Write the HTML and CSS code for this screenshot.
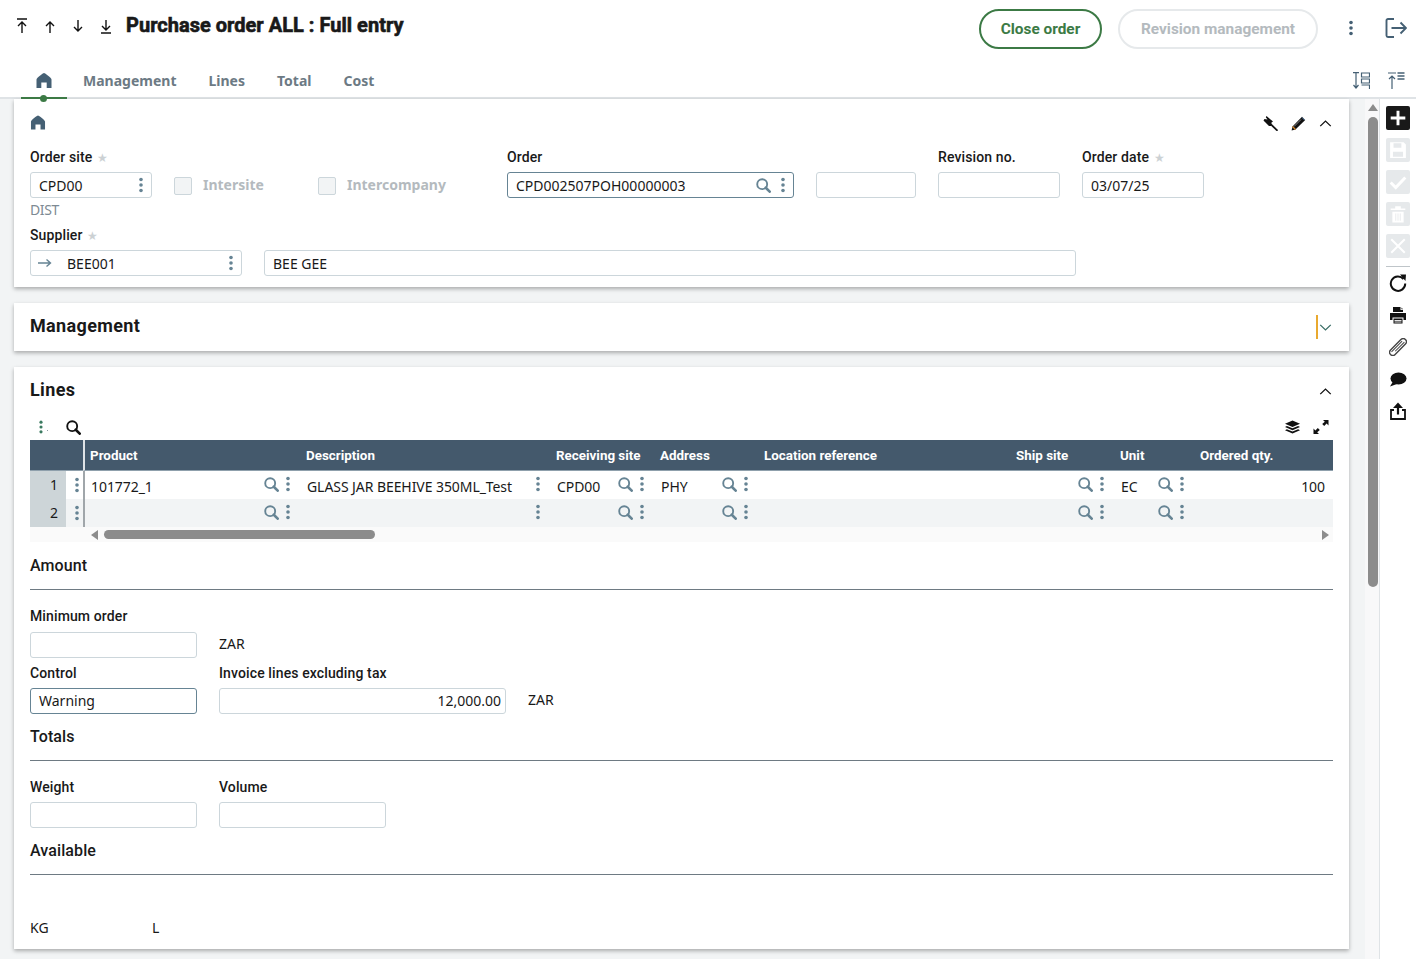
FILE: index.html
```html
<!DOCTYPE html>
<html lang="en">
<head>
<meta charset="utf-8">
<title>Purchase order ALL : Full entry</title>
<link rel="stylesheet" href="styles.css">
</head>
<body>
<svg class="sprite" xmlns="http://www.w3.org/2000/svg">
  <symbol id="i-home" viewBox="0 0 16 16"><path d="M8 .5 C9 .5 15.500 5.500 15.500 7 V15.500 H10.700 V10 H5.300 V15.500 H.5 V7 C.5 5.500 7 .5 8 .5Z" fill="currentColor"/></symbol>
  <symbol id="i-search" viewBox="0 0 16 16"><circle cx="6.600" cy="6.600" r="5.300" fill="none" stroke="currentColor" stroke-width="2"/><path d="M10.400 10.400 14.600 14.600" stroke="currentColor" stroke-width="2.800" stroke-linecap="round"/></symbol>
  <symbol id="i-dots" viewBox="0 0 4 16"><circle cx="2" cy="2.500" r="1.800" fill="currentColor"/><circle cx="2" cy="8" r="1.800" fill="currentColor"/><circle cx="2" cy="13.500" r="1.800" fill="currentColor"/></symbol>
  <symbol id="i-chev" viewBox="0 0 14 8"><path d="M1 7 7 1.200 13 7" fill="none" stroke="currentColor" stroke-width="1.500"/></symbol>
</svg>

<header class="head">
  <div class="topbar">
    <div class="navs">
      <svg class="nav" viewBox="0 0 12 16"><path d="M1 1H11M6 15V4M2 8 6 4 10 8" fill="none" stroke="currentColor" stroke-width="1.400"/></svg>
      <svg class="nav" viewBox="0 0 12 16"><path d="M6 15V4M2 8 6 4 10 8" fill="none" stroke="currentColor" stroke-width="1.400"/></svg>
      <svg class="nav" viewBox="0 0 12 16"><path d="M6 2V13M2 9 6 13 10 9" fill="none" stroke="currentColor" stroke-width="1.400"/></svg>
      <svg class="nav" viewBox="0 0 12 16"><path d="M6 2V12M2 8 6 12 10 8M1 15H11" fill="none" stroke="currentColor" stroke-width="1.400"/></svg>
    </div>
    <h1 class="title">Purchase order ALL : Full entry</h1>
    <button class="pill pill-green">Close order</button>
    <button class="pill pill-off">Revision management</button>
    <svg class="head-dots"><use href="#i-dots"/></svg>
    <svg class="logout" viewBox="0 0 22 22"><path d="M9 2H3a1.500 1.500 0 0 0-1.500 1.500V18.500A1.500 1.500 0 0 0 3 20H9M6.500 11H20.500M15.500 5.500 21 11 15.500 16.500" fill="none" stroke="currentColor" stroke-width="1.900"/></svg>
  </div>
  <nav class="tabs">
    <a class="tab tab-home"><svg class="home"><use href="#i-home"/></svg></a>
    <a class="tab">Management</a>
    <a class="tab">Lines</a>
    <a class="tab">Total</a>
    <a class="tab">Cost</a>
    <svg class="tool tool-first" viewBox="0 0 17 17"><path d="M0 .7H6M3 .7V16M.5 13 3 16 5.500 13" fill="none" stroke="currentColor" stroke-width="1.200"/><path d="M8.500 1H16.500V5H8.500ZM8.500 7H16.500V11H8.500ZM8.500 13H16.500V17" fill="none" stroke="currentColor" stroke-width="1.200"/></svg>
    <svg class="tool" viewBox="0 0 17 17"><path d="M0 1H8M4 17V4M1 7 4 4 7 7" fill="none" stroke="currentColor" stroke-width="1.200"/><path d="M9.500 1H16.500M9.500 4H16.500M9.500 7H16.500" fill="none" stroke="currentColor" stroke-width="1.500"/></svg>
  </nav>
</header>

<div class="body">
  <main class="main">
    <section class="card card-top">
      <div class="card-icons">
        <svg class="home home-sm"><use href="#i-home"/></svg>
        <span class="spacer"></span>
        <svg class="ic14" viewBox="0 0 15 15"><path d="M3.500 0 10 5.500 8.500 6.500 8 10 6 10 .5 4.500 1.500 3 4.500 3.500 2.800 1.200Z" fill="#111"/><path d="M5.500 6 14.500 14.800" stroke="#111" stroke-width="1.700"/></svg>
        <svg class="ic14" viewBox="0 0 15 15"><path d="M11 .8 14.200 4 4.500 13.500 .6 14.400 1.500 10.500Z" fill="#111"/><path d="M1.500 10.500 4.500 13.500" stroke="#d98a2b" stroke-width="1.200"/><path d="M11 1.500 13.500 4" stroke="#6aa0d8" stroke-width=".8"/><path d="M3 10.500 10 3.500" stroke="#fff" stroke-width=".5"/></svg>
        <svg class="chev"><use href="#i-chev"/></svg>
      </div>
      <div class="row">
        <div class="field w122"><label class="lbl">Order site <i class="req">★</i></label><div class="inp">CPD00<svg class="dots"><use href="#i-dots"/></svg></div></div>
        <div class="check w122"><span class="box"></span><span class="check-t">Intersite</span></div>
        <div class="check w167"><span class="box"></span><span class="check-t">Intercompany</span></div>
        <div class="field w287"><label class="lbl">Order</label><div class="inp inp-dark">CPD002507POH00000003<svg class="mag"><use href="#i-search"/></svg><svg class="dots dots-near"><use href="#i-dots"/></svg></div></div>
        <div class="field w100"><span class="lbl">&nbsp;</span><div class="inp"></div></div>
        <div class="field w122"><label class="lbl">Revision no.</label><div class="inp"></div></div>
        <div class="field w122"><label class="lbl">Order date <i class="req">★</i></label><div class="inp">03/07/25</div></div>
      </div>
      <div class="sub">DIST</div>
      <label class="lbl">Supplier <i class="req">★</i></label>
      <div class="row">
        <div class="inp w212 inp-link"><svg class="arrow" viewBox="0 0 14 10"><path d="M0 5H12M8.500 1.500 12.500 5 8.500 8.500" fill="none" stroke="currentColor" stroke-width="1.400"/></svg>BEE001<svg class="dots"><use href="#i-dots"/></svg></div>
        <div class="inp w812">BEE GEE</div>
      </div>
    </section>

    <section class="card card-bar">
      <h2 class="h2">Management</h2>
      <span class="amber"></span>
      <svg class="chev chev-down"><use href="#i-chev"/></svg>
    </section>

    <section class="card card-lines">
      <div class="lines-head"><h2 class="h2">Lines</h2><svg class="chev chev-lines"><use href="#i-chev"/></svg></div>
      <div class="grid-tools">
        <svg class="dots dots-green"><use href="#i-dots"/></svg>
        <span class="speck"></span>
        <svg class="tool-mag"><use href="#i-search"/></svg>
        <span class="spacer"></span>
        <svg class="layers" viewBox="0 0 16 14"><path d="M8 0 16 3.500 8 7 0 3.500Z" fill="#111"/><path d="M2 5.800 8 8.400 14 5.800 16 6.900 8 10.400 0 6.900ZM2 9.300 8 11.800 14 9.300 16 10.400 8 14 0 10.400Z" fill="#111"/></svg>
        <svg class="expand" viewBox="0 0 16 16"><path d="M10 1H15.500V6.500L13.600 4.600 11.200 7 9.200 5 11.800 2.800ZM6 15H.5V9.500L2.400 11.400 4.800 9 6.800 11 4.200 13.200Z" fill="#111"/></svg>
      </div>
      <table class="grid">
        <colgroup><col class="c-num"><col class="c-hnd"><col class="c-prod"><col class="c-desc"><col class="c-site"><col class="c-site"><col class="c-loc"><col class="c-site"><col class="c-unit"><col></colgroup>
        <thead><tr><th colspan="2" class="corner"></th><th class="first">Product</th><th>Description</th><th>Receiving site</th><th>Address</th><th>Location reference</th><th>Ship site</th><th>Unit</th><th>Ordered qty.</th></tr></thead>
        <tbody>
          <tr>
            <td class="num">1</td><td class="hnd"><svg class="dots"><use href="#i-dots"/></svg></td>
            <td class="first"><div class="cell">101772_1<svg class="mag"><use href="#i-search"/></svg><svg class="dots"><use href="#i-dots"/></svg></div></td>
            <td><div class="cell">GLASS JAR BEEHIVE 350ML_Test<svg class="dots only"><use href="#i-dots"/></svg></div></td>
            <td><div class="cell">CPD00<svg class="mag"><use href="#i-search"/></svg><svg class="dots"><use href="#i-dots"/></svg></div></td>
            <td><div class="cell">PHY<svg class="mag"><use href="#i-search"/></svg><svg class="dots"><use href="#i-dots"/></svg></div></td>
            <td></td>
            <td><div class="cell"><svg class="mag"><use href="#i-search"/></svg><svg class="dots"><use href="#i-dots"/></svg></div></td>
            <td><div class="cell">EC<svg class="mag"><use href="#i-search"/></svg><svg class="dots"><use href="#i-dots"/></svg></div></td>
            <td class="right"><div class="cell cell-end">100</div></td>
          </tr>
          <tr class="alt">
            <td class="num">2</td><td class="hnd"><svg class="dots"><use href="#i-dots"/></svg></td>
            <td class="first"><div class="cell"><svg class="mag"><use href="#i-search"/></svg><svg class="dots"><use href="#i-dots"/></svg></div></td>
            <td><div class="cell"><svg class="dots only"><use href="#i-dots"/></svg></div></td>
            <td><div class="cell"><svg class="mag"><use href="#i-search"/></svg><svg class="dots"><use href="#i-dots"/></svg></div></td>
            <td><div class="cell"><svg class="mag"><use href="#i-search"/></svg><svg class="dots"><use href="#i-dots"/></svg></div></td>
            <td></td>
            <td><div class="cell"><svg class="mag"><use href="#i-search"/></svg><svg class="dots"><use href="#i-dots"/></svg></div></td>
            <td><div class="cell"><svg class="mag"><use href="#i-search"/></svg><svg class="dots"><use href="#i-dots"/></svg></div></td>
            <td></td>
          </tr>
        </tbody>
      </table>
      <div class="hscroll">
        <span class="tri tri-l"></span>
        <span class="hthumb"></span>
        <span class="spacer"></span>
        <span class="tri tri-r"></span>
      </div>

      <h3 class="h3 first-h3">Amount</h3>
      <div class="amount">
        <label class="lbl">Minimum order</label>
        <div class="row line-row"><div class="inp w167"></div><span class="unit">ZAR</span></div>
      </div>
      <div class="row pair">
        <div class="field w167"><label class="lbl">Control</label><div class="inp inp-dark">Warning</div></div>
        <div class="field w287"><label class="lbl">Invoice lines excluding tax</label><div class="inp inp-right">12,000.00</div></div>
        <span class="unit unit-end">ZAR</span>
      </div>
      <h3 class="h3">Totals</h3>
      <div class="row pair pair-t">
        <div class="field w167"><label class="lbl">Weight</label><div class="inp"></div></div>
        <div class="field w167"><label class="lbl">Volume</label><div class="inp"></div></div>
      </div>
      <h3 class="h3">Available</h3>
      <div class="foot-units"><span class="kg">KG</span><span>L</span></div>
    </section>
  </main>

  <div class="vscroll"><span class="tri tri-u"></span><span class="vthumb"></span></div>

  <aside class="side">
    <button class="act act-dark"><svg viewBox="0 0 16 16"><path d="M8 1.500V14.500M1.500 8H14.500" stroke="#fff" stroke-width="2.600"/></svg></button>
    <button class="act"><svg viewBox="0 0 16 16"><path d="M1 1H13L15 3V15H1ZM4 2V6H11V2ZM3.500 9.500V14H12.500V9.500Z" fill="#fff" fill-rule="evenodd"/></svg></button>
    <button class="act"><svg viewBox="0 0 16 16"><path d="M1.500 8.500 6 13 14.500 4" fill="none" stroke="#fff" stroke-width="2.600"/></svg></button>
    <button class="act"><svg viewBox="0 0 16 16"><path d="M1.500 3H14.500V4.500H1.500ZM5.500 3V1H10.500V3M3 6H13V15.500H3Z" fill="#fff"/><path d="M6 7.500V14M8 7.500V14M10 7.500V14" stroke="#e6e9eb" stroke-width=".8"/></svg></button>
    <button class="act"><svg viewBox="0 0 16 16"><path d="M2 2 14 14M14 2 2 14" stroke="#fff" stroke-width="1.800"/></svg></button>
    <span class="side-line"></span>
    <svg class="side-ic" viewBox="0 0 18 18"><path d="M14.500 5A7.200 7.200 0 1 0 16.200 9.500" fill="none" stroke="#111" stroke-width="2"/><path d="M11 .5 17 .5 16.500 7Z" fill="#111"/></svg>
    <svg class="side-ic" viewBox="0 0 18 18"><path d="M4 1H11.500V4H14V6H4ZM12.500 1.500 14 3.200H12.500ZM1 7H17V14H14.500V11.500H3.500V14H1ZM4.500 12.500H13.500V17.500H4.500Z" fill="#111"/><path d="M5.500 14.500H12.500M5.500 16H12.500" stroke="#fff" stroke-width=".9"/></svg>
    <svg class="side-ic" viewBox="0 0 18 18"><g transform="rotate(45 9 9)"><rect x="5.800" y="-1.500" width="6.400" height="21" rx="3.200" fill="none" stroke="#444" stroke-width="1.400"/><path d="M7.800 2V17M10 1V14" stroke="#444" stroke-width="1"/></g></svg>
    <svg class="side-ic" viewBox="0 0 18 18"><ellipse cx="9.500" cy="8.500" rx="8" ry="6" fill="#111"/><path d="M4 11.500 1 16.500 8 14Z" fill="#111"/></svg>
    <svg class="side-ic" viewBox="0 0 18 18"><path d="M5 8H2V17H16V8H13" fill="none" stroke="#111" stroke-width="1.800"/><path d="M9 12.500V3" stroke="#111" stroke-width="2.200"/><path d="M4 6 9 .5 14 6Z" fill="#111"/></svg>
  </aside>
</div>
</body>
</html>
```
FILE: styles.css
```css
* { box-sizing: border-box; }
html, body { margin: 0; padding: 0; }
body {
  width: 1416px;
  height: 959px;
  overflow: hidden;
  background: #f2f4f5;
  color: #191919;
  font-family: "Noto Sans", "Open Sans", sans-serif;
  font-size: 14px;
  display: flex;
  flex-direction: column;
}
.sprite { display: none; }
.spacer { flex: 1; }

/* header */
.head {
  height: 99px;
  flex: none;
  background: #fff;
  border-bottom: 2px solid #dfe3e6;
}
.topbar { height: 57px; display: flex; align-items: flex-start; }
.navs { display: flex; gap: 16px; padding: 18px 0 0 16px; }
.nav { width: 12px; height: 16px; color: #111; }
.title {
  margin: 12px 0 0 14px;
  font: 700 20px/27px Roboto, sans-serif;
  letter-spacing: .02px;
  -webkit-text-stroke: .6px #191919;
  flex: 1;
}
.pill {
  height: 40px;
  margin-top: 9px;
  border-radius: 20px;
  background: #fff;
  font: 700 15.400px Roboto, sans-serif;
  padding: 0;
}
.pill-green { width: 123px; border: 2px solid #3c7a45; color: #3c7a45; }
.pill-off { width: 200px; margin-left: 16px; border: 2px solid #e6e9eb; color: #b4babe; }
.head-dots { width: 4px; height: 16px; margin: 20px 0 0 31px; color: #456074; }
.logout { width: 22px; height: 22px; margin: 17px 9px 0 32px; color: #456074; }

.tabs { height: 40px; display: flex; align-items: flex-start; padding-left: 21px; }
.tab {
  height: 42px;
  padding: 14px 16px 0;
  font-weight: 700;
  font-size: 14px;
  line-height: 20px;
  color: #6c7a84;
}
.tab-home {
  width: 46px;
  position: relative;
  padding: 15px 0 0 15px;
  border-bottom: 2px solid #3c7a45;
}
.tab-home::after {
  content: "";
  position: absolute;
  left: 19px;
  bottom: -4.500px;
  width: 7px;
  height: 7px;
  border-radius: 50%;
  background: #3c7a45;
}
.home { display: block; width: 16px; height: 17px; color: #456074; }
.tool { width: 17px; height: 17px; margin: 15px 0 0 18px; color: #456074; }
.tool-first { margin-left: auto; }
.tool:last-child { margin-right: 11px; }

/* layout */
.body { flex: 1; display: flex; min-height: 0; }
.main { width: 1365px; padding: 0 16px 0 14px; flex: none; }
.card { background: #fff; box-shadow: 0 2px 4px rgba(0, 0, 0, .3); margin-bottom: 16px; }
.card-top { height: 188px; padding: 14px 16px 0; }
.card-icons { display: flex; align-items: center; height: 20px; margin-bottom: 15px; }
.home-sm { height: 15px; margin-top: -1px; }
.ic14 { width: 15px; height: 15px; margin-right: 13px; }
.chev { width: 13px; height: 7px; margin-right: 1px; color: #111; }
.row { display: flex; gap: 22px; }
.field { display: flex; flex-direction: column; }
.lbl {
  display: block;
  height: 24px;
  font: 500 14px/18px Roboto, sans-serif;
  letter-spacing: .12px;
  color: #191919;
}
.req { font-style: normal; font-size: 12px; color: #ccd1d4; margin-left: 1px; }
.inp {
  height: 26px;
  border: 1px solid #ccd6db;
  border-radius: 3px;
  background: #fff;
  padding: 0 8px;
  font-size: 14px;
  line-height: 25px;
  display: flex;
  align-items: center;
  color: #191919;
}
.inp-dark { border-color: #668494; }
.inp-right { justify-content: flex-end; padding-right: 4px; }
.inp-link { padding-left: 7px; }
.pair .inp { padding-bottom: 2px; }
.arrow { width: 14px; height: 10px; margin-right: 15px; color: #668494; flex: none; }
.dots { width: 4px; height: 16px; color: #668494; margin-left: auto; flex: none; }
.mag { width: 15px; height: 15px; color: #668494; margin-left: auto; flex: none; }
.mag + .dots { margin-left: 7px; }
.mag + .dots-near { margin-left: 10px; }
.w100 { width: 100px; }
.w122 { width: 122px; }
.w167 { width: 167px; }
.w212 { width: 212px; }
.w287 { width: 287px; }
.w812 { width: 812px; }
.check { display: flex; padding-top: 28px; align-items: flex-start; }
.box { width: 18px; height: 18px; border: 1px solid #ccd6db; border-radius: 2px; background: #f2f4f5; margin-top: 1px; }
.check-t { margin: -1px 0 0 11px; font-weight: 700; color: #b4babe; line-height: 20px; }
.sub { height: 28px; line-height: 24px; color: #7d8a93; letter-spacing: -.4px; }

.card-bar { height: 48px; display: flex; align-items: center; padding: 0 16px; }
.h2 { margin: 0; font: 700 18px/24px Roboto, sans-serif; letter-spacing: .35px; }
.card-bar .h2 { flex: 1; padding-bottom: 2px; }
.amber { width: 2px; height: 24px; background: #e9a92f; margin-right: 1px; }
.chev-down { transform: rotate(180deg); color: #3a6d66; }

.card-lines { height: 582px; padding: 0 16px; margin-bottom: 0; }
.lines-head { height: 46px; display: flex; align-items: center; justify-content: space-between; }
.chev-lines { margin-top: 2px; }
.grid-tools { height: 27px; display: flex; align-items: center; padding: 1px 4px 0 9px; }
.dots-green { color: #3a7a60; margin: 0; height: 14px; }
.speck { width: 1px; height: 1px; background: #8a9aa0; margin: 6px 0 0 4px; align-self: center; }
.tool-mag { width: 15px; height: 15px; color: #111; margin-left: 18px; }
.layers { width: 15px; height: 14px; }
.expand { width: 16px; height: 16px; margin-left: 13px; margin-top: -1px; }

.grid { width: 1303px; table-layout: fixed; border-collapse: separate; border-spacing: 0; }
.c-num { width: 36px; }
.c-hnd { width: 17px; }
.c-prod { width: 219px; }
.c-desc { width: 250px; }
.c-site { width: 104px; }
.c-loc { width: 252px; }
.c-unit { width: 80px; }
.grid th {
  height: 31px;
  background: #44596c;
  color: #fff;
  text-align: left;
  font: 700 13.400px Roboto, sans-serif;
  padding: 0 4px;
  border-bottom: 1px solid #8fa0ac;
}
.grid td { height: 28px; padding: 0 12px 0 5px; white-space: nowrap; letter-spacing: -.07px; }
.grid th.first { border-left: 2px solid #dfe3e6; padding-left: 5px; }
.grid td.first { border-left: 2px solid #a0a6aa; padding-left: 6px; }
.alt td { background: #f2f4f5; }
.grid td.num, .alt td.num { background: #cdd5d8; text-align: right; padding: 0 8px 2px 0; }
.grid td.hnd { padding: 0 0 0 9px; }
.hnd .dots { display: block; margin-left: 0; }
.cell { display: flex; align-items: center; height: 28px; padding-top: 2px; }
.cell .mag, .cell .dots { position: relative; top: -2px; }
.cell-end { justify-content: flex-end; }
.right { text-align: right; }
.grid td.right { padding-right: 8px; }

.hscroll { height: 15px; background: #fafafa; display: flex; align-items: center; padding-left: 61px; padding-right: 4px; }
.hthumb { width: 271px; height: 9px; background: #8c8c8c; border-radius: 5px; margin-left: 6px; }
.tri { width: 0; height: 0; display: block; flex: none; }
.tri-l { border: 5px solid transparent; border-left: 0; border-right: 7px solid #8c8c8c; }
.tri-r { border: 5px solid transparent; border-right: 0; border-left: 7px solid #8c8c8c; }
.tri-u { border: 5px solid transparent; border-top: 0; border-bottom: 7px solid #8c8c8c; }

.h3 {
  margin: 13px 0 0;
  padding-bottom: 13px;
  font: 500 16px/20px Roboto, sans-serif;
  letter-spacing: .1px;
  border-bottom: 1px solid #6e7a83;
}
.first-h3 { margin-top: 14px; }
.amount { margin-top: 17px; }
.amount .lbl { height: 25px; }
.line-row { align-items: center; }
.unit { color: #191919; }
.line-row .unit { padding-bottom: 4px; }
.pair { margin-top: 6px; }
.pair-t { margin-top: 17px; }
.unit-end { align-self: flex-end; height: 26px; line-height: 24px; }
.foot-units { margin-top: 43px; display: flex; line-height: 20px; }
.kg { width: 122px; }

/* vertical scrollbar */
.vscroll {
  width: 14px;
  flex: none;
  background: #f8f8f9;
  display: flex;
  flex-direction: column;
  align-items: center;
  padding: 5px 0 0 2px;
}
.vthumb { width: 10px; height: 470px; background: #8c8c8c; border-radius: 5px; margin-top: 6px; }

/* action rail */
.side {
  width: 37px;
  flex: none;
  background: #fff;
  border-left: 1px solid #dfe3e6;
  display: flex;
  flex-direction: column;
  align-items: center;
  padding-top: 7px;
}
.act {
  width: 24px;
  height: 24px;
  padding: 3px;
  border: 0;
  border-radius: 2px;
  background: #e6e9eb;
  margin-bottom: 8px;
}
.act svg { display: block; width: 18px; height: 18px; }
.act-dark { background: #191919; }
.side-line { width: 24px; height: 1px; background: #bfc5c9; flex: none; margin-bottom: 7px; }
.side-ic { width: 18px; height: 18px; margin-bottom: 14px; flex: none; }
```
